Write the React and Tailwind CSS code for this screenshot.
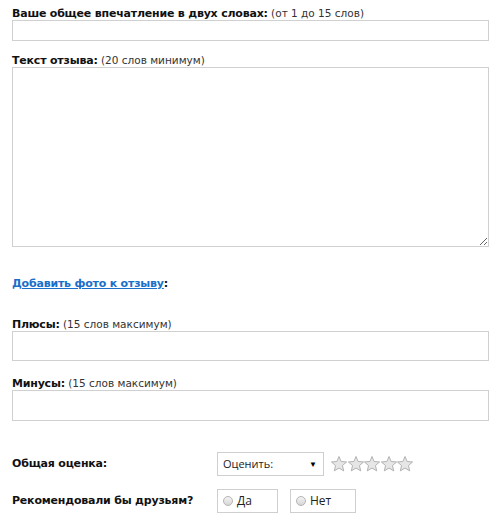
import React from 'react';

const Label = ({ title, hint }) => (
  <div className="text-[11px] leading-[13px] text-[#111]">
    <span className="font-bold tracking-[-0.2px]">{title}</span>
    {hint && <span className="text-[#333] text-[10.5px]"> {hint}</span>}
  </div>
);

const Star = () => (
  <svg width="16" height="16" viewBox="0.6 0.8 22.8 22.8">
    <polygon
      points="12,1.5 15,8.6 22.8,9.3 16.9,14.4 18.7,22 12,18 5.3,22 7.1,14.4 1.2,9.3 9,8.6"
      fill="#e6e6e6"
      stroke="#b0b0b0"
      strokeWidth="1.4"
      strokeLinejoin="round"
    />
  </svg>
);

const Radio = ({ label, width }) => (
  <label className={`flex items-center gap-[4px] h-[24px] border border-[#cfcfcf] bg-white pl-[5px] ${width}`}>
    <span className="w-[10px] h-[10px] rounded-full border border-[#b5b5b5] bg-gradient-to-b from-[#f4f4f4] to-[#d6d6d6]" />
    <span className="text-[12px] text-[#222] font-['Open_Sans','Liberation_Sans',sans-serif]">{label}</span>
  </label>
);

export default function App() {
  return (
    <div className="bg-white w-[500px] h-[529px] pl-[12px] pr-[11px] pt-[7px] font-['DejaVu_Sans','Verdana',sans-serif] overflow-hidden">
      <Label title="Ваше общее впечатление в двух словах:" hint="(от 1 до 15 слов)" />
      <input type="text" className="block w-full h-[21px] border border-[#d0d0d0] outline-none" />

      <div className="mt-[13px]">
        <Label title="Текст отзыва:" hint="(20 слов минимум)" />
      </div>
      <textarea className="block w-full h-[180px] border border-[#d0d0d0] outline-none" />

      <div className="mt-[30px] text-[11px] leading-[13px] font-bold tracking-[-0.2px] text-[#111]">
        <a href="#" className="text-[#1a6fc9] underline">Добавить фото к отзыву</a>:
      </div>

      <div className="mt-[28px]">
        <Label title="Плюсы:" hint="(15 слов максимум)" />
      </div>
      <input type="text" className="block w-full h-[30px] border border-[#d0d0d0] outline-none" />

      <div className="mt-[16px]">
        <Label title="Минусы:" hint="(15 слов максимум)" />
      </div>
      <input type="text" className="block w-full h-[31px] border border-[#d0d0d0] outline-none" />

      <div className="mt-[31px] flex items-center">
        <div className="w-[205px] text-[11px] font-bold tracking-[-0.2px] text-[#111]">Общая оценка:</div>
        <div className="flex items-center justify-between w-[107px] h-[24px] border border-[#cfcfcf] pl-[5px] pr-[6px] font-['Open_Sans','Liberation_Sans',sans-serif] text-[11px] text-[#222]">
          <span>Оценить:</span>
          <span className="text-[8px] text-black">▼</span>
        </div>
        <div className="flex ml-[7px] gap-[0.5px]">
          <Star /><Star /><Star /><Star /><Star />
        </div>
      </div>

      <div className="mt-[13px] flex items-center">
        <div className="w-[205px] text-[11px] font-bold tracking-[-0.2px] text-[#111]">Рекомендовали бы друзьям?</div>
        <Radio label="Да" width="w-[61px]" />
        <div className="w-[12px]" />
        <Radio label="Нет" width="w-[66px]" />
      </div>
    </div>
  );
}
